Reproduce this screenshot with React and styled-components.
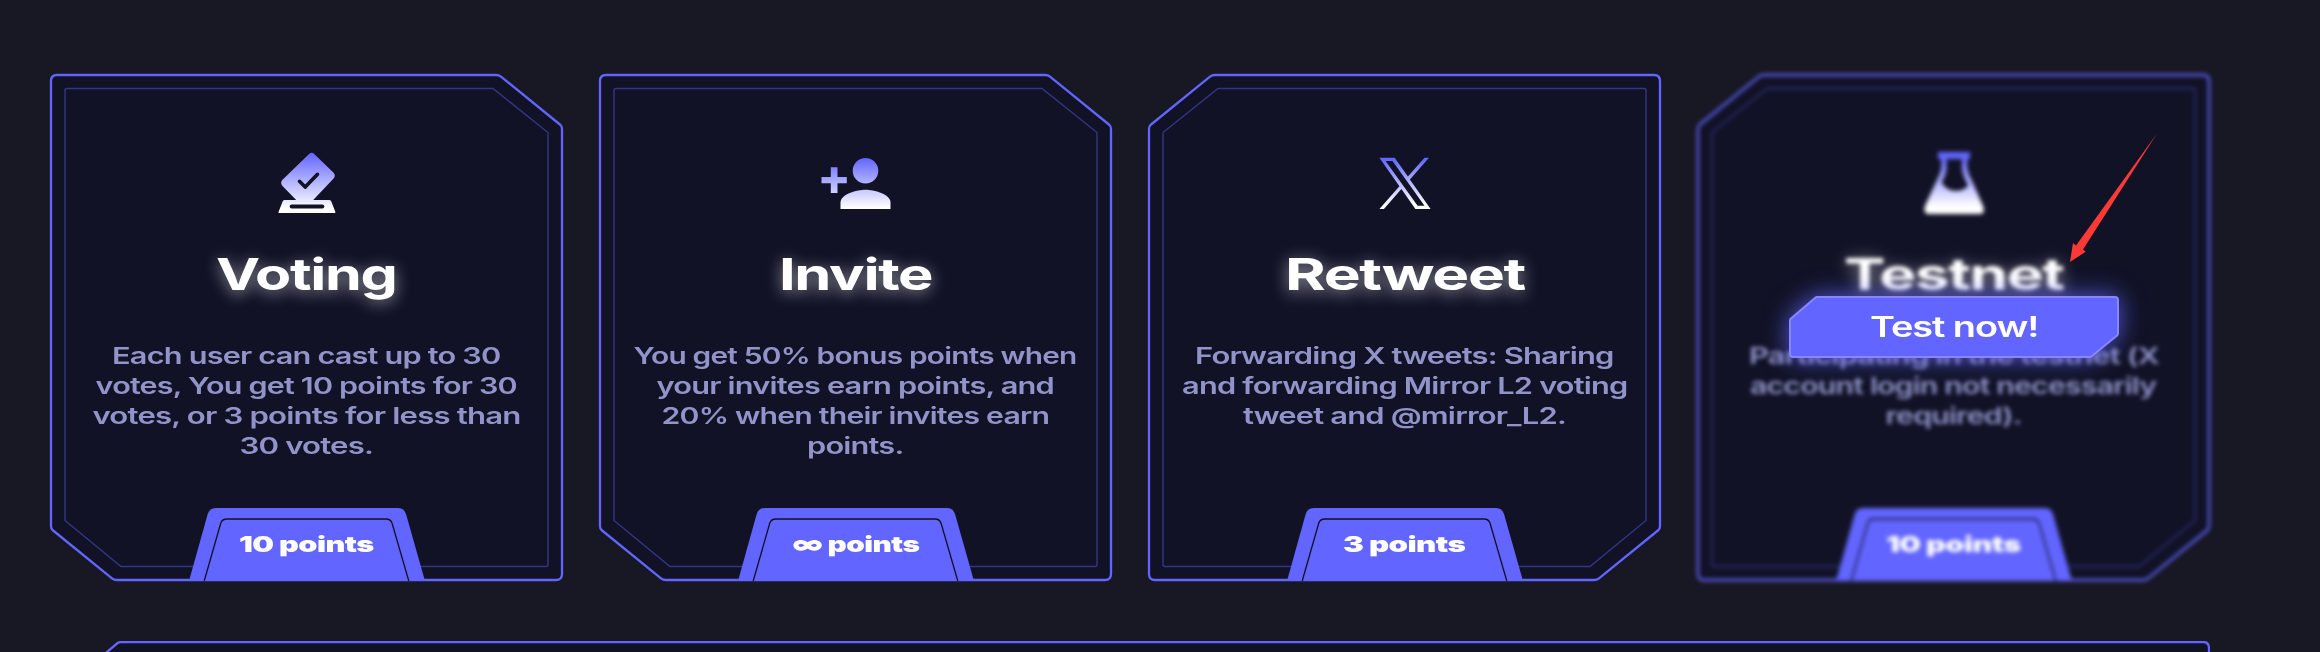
import React, { useLayoutEffect, useRef, useState } from 'react';
import styled, { createGlobalStyle, css } from 'styled-components';

const Global = createGlobalStyle`
  * { box-sizing: border-box; }
  body {
    margin: 0;
    background: #181724;
    font-family: Inter, "Open Sans", sans-serif;
  }
`;

const Page = styled.main`
  display: flex;
  flex-direction: column;
  gap: 60px;
  width: 2320px;
  height: 652px;
  padding: 74px 110px 0 50px;
  overflow: hidden;
`;

const CardRow = styled.section`
  display: flex;
  gap: 36px;
  flex: none;
`;

const CardSlot = styled.div`
  position: relative;
  width: 513px;
  height: 507px;
  flex: none;
`;

const Card = styled.article`
  position: relative;
  display: flex;
  flex-direction: column;
  align-items: center;
  width: 100%;
  height: 100%;
  padding-top: 77px;
  ${(p) => p.$blurred && css`filter: blur(2px);`}
`;

const Frame = styled.svg`
  position: absolute;
  inset: 0;
  z-index: -1;
  overflow: visible;
  transform: ${(p) => (p.$mirrored ? 'scaleX(-1)' : 'none')};
`;

const Icon = styled.svg`
  display: block;
  flex: none;
`;

const Title = styled.h2`
  margin: 31px 0 0;
  height: 56px;
  line-height: 56px;
  font-size: 44px;
  font-weight: 700;
  letter-spacing: -1px;
  color: #fff;
  text-shadow: 0 3px 14px rgba(255, 255, 255, 0.55);
`;

const Description = styled.div`
  display: flex;
  flex-direction: column;
  align-items: center;
  margin-top: 39px;
  height: 167px;
  line-height: 30px;
  font-size: 22.5px;
  font-weight: 560;
  letter-spacing: -0.6px;
  color: #9293c8;
`;

const FitText = styled.span`
  display: block;
  width: max-content;
  white-space: pre;
`;

const Badge = styled.div`
  position: relative;
  display: flex;
  justify-content: center;
  width: 236px;
  height: 73px;
  padding-top: 21px;
  line-height: 30px;
  font-size: 22px;
  font-weight: 900;
  letter-spacing: -0.4px;
  color: #fff;
`;

const BadgeShape = styled.svg`
  position: absolute;
  inset: 0;
  z-index: -1;
`;

const Button = styled.button`
  position: absolute;
  left: 92px;
  top: 222px;
  display: flex;
  align-items: center;
  justify-content: center;
  width: 330px;
  height: 62px;
  padding: 0;
  border: 0;
  background: none;
  isolation: isolate;
  font-family: inherit;
  font-size: 28px;
  font-weight: 600;
  letter-spacing: -0.8px;
  color: #fff;
`;

const ButtonShape = styled.svg`
  position: absolute;
  inset: 0;
  z-index: -1;
  overflow: visible;
  filter: drop-shadow(0 0 12px rgba(98, 101, 255, 0.85));
`;

const Pointer = styled.svg`
  position: absolute;
  left: 372px;
  top: 57px;
`;

const Panel = styled.section`
  width: 2160px;
  height: 300px;
  flex: none;
`;

/* Stretches a line of text horizontally to the given display width. */
function Fit({ width, children }) {
  const ref = useRef(null);
  const [scale, setScale] = useState(1);
  useLayoutEffect(() => {
    setScale(width / ref.current.offsetWidth);
  }, [width, children]);
  return (
    <FitText ref={ref} style={{ transform: `scaleX(${scale})` }}>
      {children}
    </FitText>
  );
}

function CardFrame({ mirrored }) {
  return (
    <Frame width="513" height="507" viewBox="0 0 513 507" $mirrored={mirrored}>
      <path
        d="M7 1H446Q449 1 451 2.6L510.500 51Q512 52.300 512 55V500Q512 506 506 506H67Q64 506 62 504.400L2.500 456Q1 454.700 1 452V7Q1 1 7 1Z"
        fill="#111226"
        stroke="#6265ff"
        strokeWidth="2.300"
      />
      <path
        d="M17 14.500H443L498 58.500V490.500Q498 492.500 496 492.500H71L15 446.500V16.500Q15 14.500 17 14.500Z"
        fill="none"
        stroke="#6265ff"
        strokeOpacity="0.44"
        strokeWidth="1.400"
      />
    </Frame>
  );
}

function Gradient({ id, from, to }) {
  return (
    <defs>
      <linearGradient id={id} gradientUnits="userSpaceOnUse" x1="0" y1={from} x2="0" y2={to}>
        <stop offset="0" stopColor="#6265ff" />
        <stop offset="1" stopColor="#fff" />
      </linearGradient>
    </defs>
  );
}

function VoteIcon() {
  return (
    <Icon width="72" height="64" viewBox="-4 0 72 64">
      <Gradient id="vote" from="2" to="58" />
      <path
        fill="url(#vote)"
        d="M33.800 3.200Q36.700 .4 39.500 3.200L58.600 21.800Q61.100 24.700 58.600 27.500L38.200 49H54Q55.600 49 56.200 50.300L60.400 61Q60.500 62 59.700 62H4Q3.200 62 3.500 61L7.700 50.300Q8.300 49 9.700 49H21.200L7.500 35Q4.800 31.800 7.500 28.700Z"
      />
      <path d="M24.500 30.300L30.200 36.100L42.500 23.300" fill="none" stroke="#111226" strokeWidth="3.600" strokeLinecap="round" strokeLinejoin="round" />
      <path d="M16.600 55.500H47.400" stroke="#111226" strokeWidth="3.800" strokeLinecap="round" />
    </Icon>
  );
}

function InviteIcon() {
  return (
    <Icon width="72" height="64" viewBox="-4 0 72 64">
      <Gradient id="invite" from="7" to="57" />
      <g fill="url(#invite)">
        <path d="M6.800 16.300H13.500V26H22.800V32.300H13.500V42H6.800V32.300H-2.500V26H6.800Z" />
        <circle cx="41.500" cy="19.700" r="12.800" />
        <path d="M16.500 58V51.500C16.500 43 33 38.700 41.500 38.700C50 38.700 66.500 43 66.500 51.500V58Z" />
      </g>
    </Icon>
  );
}

function XIcon() {
  return (
    <Icon width="72" height="64" viewBox="-4 0 72 64">
      <Gradient id="x" from="8" to="54" />
      <path
        fill="url(#x)"
        fillRule="evenodd"
        d="M36.900 28.400L56 6.700H51.500L34.900 25.500L21.700 6.700H6.400L26.400 35.200L6.400 58H10.900L28.400 38.100L42.400 58H57.600ZM12.600 10H19.500L51.500 54.700H44.600Z"
      />
    </Icon>
  );
}

function FlaskIcon() {
  return (
    <Icon width="72" height="64" viewBox="-4 0 72 64">
      <Gradient id="flask" from="6" to="56" />
      <path
        fill="url(#flask)"
        fillRule="evenodd"
        d="M16 1H48V8H45.200V17Q46 23 50 30L61 55Q63.500 63 58 63H6.500Q1 63 3 55L14.500 30Q18.500 23 19.300 17V8H16ZM24.500 8V18Q23.800 24 19.500 31.500Q24.500 39.500 33 40Q42 40 46.300 34.500Q41 25 40 18V8Z"
      />
    </Icon>
  );
}

function PointsBadge({ width, children }) {
  return (
    <Badge>
      <BadgeShape width="236" height="73" viewBox="0 0 236 73">
        <path d="M0 73L18.700 6Q20.500 0 27 0H209Q215 0 217 6L236 73Z" fill="#6265ff" />
        <path d="M15.200 73L31.800 15Q33.200 11 38 11H197Q201.500 11 203 15L219.800 73" fill="none" stroke="#101124" strokeWidth="1.300" />
      </BadgeShape>
      <Fit width={width}>{children}</Fit>
    </Badge>
  );
}

const cards = [
  {
    title: ['Voting', 180],
    icon: VoteIcon,
    lines: [
      ['Each user can cast up to 30', 389],
      ['votes, You get 10 points for 30', 422],
      ['votes, or 3 points for less than', 428],
      ['30 votes.', 133],
    ],
    points: ['10 points', 135],
  },
  {
    title: ['Invite', 153],
    icon: InviteIcon,
    lines: [
      ['You get 50% bonus points when', 443],
      ['your invites earn points, and', 398],
      ['20% when their invites earn', 388],
      ['points.', 97],
    ],
    points: ['∞ points', 127],
  },
  {
    title: ['Retweet', 240],
    icon: XIcon,
    mirrored: true,
    lines: [
      ['Forwarding X tweets: Sharing', 419],
      ['and forwarding Mirror L2 voting', 446],
      ['tweet and @mirror_L2.', 323],
    ],
    points: ['3 points', 122],
  },
  {
    title: ['Testnet', 220],
    icon: FlaskIcon,
    mirrored: true,
    blurred: true,
    lines: [
      ['Participating in the testnet (X', 410],
      ['account login not necessarily', 406],
      ['required).', 136],
    ],
    points: ['10 points', 135],
  },
];

function TaskCard({ title, icon: Glyph, lines, points, mirrored, blurred, children }) {
  return (
    <CardSlot>
      <Card $blurred={blurred}>
        <CardFrame mirrored={mirrored} />
        <Glyph />
        <Title>
          <Fit width={title[1]}>{title[0]}</Fit>
        </Title>
        <Description>
          {lines.map(([text, width]) => (
            <Fit key={text} width={width}>{text}</Fit>
          ))}
        </Description>
        <PointsBadge width={points[1]}>{points[0]}</PointsBadge>
      </Card>
      {children}
    </CardSlot>
  );
}

function TestButton() {
  return (
    <Button>
      <ButtonShape width="330" height="62" viewBox="0 0 330 62">
        <path
          d="M28 1H326Q329 1 329 4V37.500Q329 38.500 328 39.500L303 60Q302 61 300.500 61H4Q1 61 1 58V24.500Q1 23.500 2 22.500L26 2Q27 1 28 1Z"
          fill="#6265ff"
          stroke="#8587fb"
          strokeWidth="2"
        />
      </ButtonShape>
      <Fit width={168}>Test now!</Fit>
    </Button>
  );
}

export default function App() {
  return (
    <>
      <Global />
      <Page>
        <CardRow>
          {cards.map((card) => (
            <TaskCard key={card.title[0]} {...card}>
              {card.blurred && (
                <>
                  <TestButton />
                  <Pointer width="90" height="134" viewBox="0 0 90 134">
                    <path d="M88 2.500L14 118.500L16.700 120.700L1 131L4 112L7 114.500Z" fill="#ff3a36" />
                  </Pointer>
                </>
              )}
            </TaskCard>
          ))}
        </CardRow>
        <Panel>
          <svg width="2160" height="300" viewBox="0 0 2160 300">
            <path
              d="M71 1H2153Q2159 1 2159 7V299H1V62Q1 59 3 57L67 2.500Q69 1 71 1Z"
              fill="#111226"
              stroke="#6265ff"
              strokeWidth="2.300"
            />
          </svg>
        </Panel>
      </Page>
    </>
  );
}
